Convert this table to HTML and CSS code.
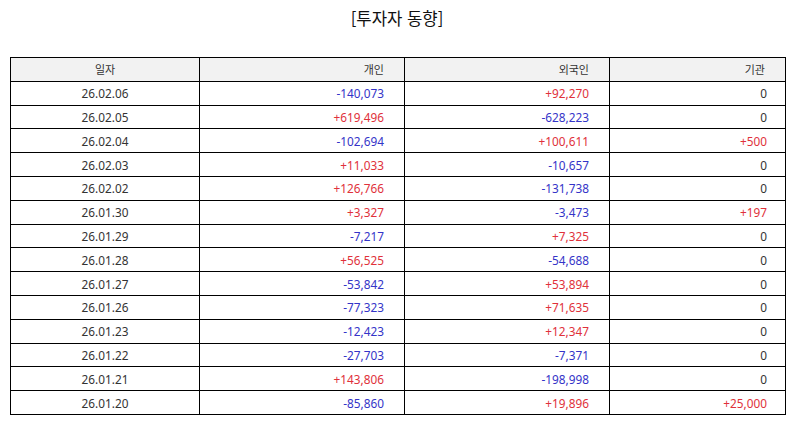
FILE: index.html
```html
<!DOCTYPE html>
<html lang="ko">
<head>
<meta charset="utf-8">
<title>투자자 동향</title>
<link rel="stylesheet" href="styles.css">
</head>
<body>
<h1 class="title">[투자자 동향]</h1>
<table class="flow">
  <colgroup>
    <col class="c-date"><col class="c-num"><col class="c-num"><col class="c-inst">
  </colgroup>
  <thead>
    <tr><th class="center">일자</th><th>개인</th><th>외국인</th><th>기관</th></tr>
  </thead>
  <tbody>
    <tr><td class="center">26.02.06</td><td class="dn">-140,073</td><td class="up">+92,270</td><td>0</td></tr>
    <tr><td class="center">26.02.05</td><td class="up">+619,496</td><td class="dn">-628,223</td><td>0</td></tr>
    <tr><td class="center">26.02.04</td><td class="dn">-102,694</td><td class="up">+100,611</td><td class="up">+500</td></tr>
    <tr><td class="center">26.02.03</td><td class="up">+11,033</td><td class="dn">-10,657</td><td>0</td></tr>
    <tr><td class="center">26.02.02</td><td class="up">+126,766</td><td class="dn">-131,738</td><td>0</td></tr>
    <tr><td class="center">26.01.30</td><td class="up">+3,327</td><td class="dn">-3,473</td><td class="up">+197</td></tr>
    <tr><td class="center">26.01.29</td><td class="dn">-7,217</td><td class="up">+7,325</td><td>0</td></tr>
    <tr><td class="center">26.01.28</td><td class="up">+56,525</td><td class="dn">-54,688</td><td>0</td></tr>
    <tr><td class="center">26.01.27</td><td class="dn">-53,842</td><td class="up">+53,894</td><td>0</td></tr>
    <tr><td class="center">26.01.26</td><td class="dn">-77,323</td><td class="up">+71,635</td><td>0</td></tr>
    <tr><td class="center">26.01.23</td><td class="dn">-12,423</td><td class="up">+12,347</td><td>0</td></tr>
    <tr><td class="center">26.01.22</td><td class="dn">-27,703</td><td class="dn">-7,371</td><td>0</td></tr>
    <tr><td class="center">26.01.21</td><td class="up">+143,806</td><td class="dn">-198,998</td><td>0</td></tr>
    <tr><td class="center">26.01.20</td><td class="dn">-85,860</td><td class="up">+19,896</td><td class="up">+25,000</td></tr>
  </tbody>
</table>
</body>
</html>
```
FILE: styles.css
```css
html, body {
  margin: 0;
  padding: 0;
  background: #ffffff;
}
body {
  font-family: "Noto Sans", "Noto Sans CJK KR", sans-serif;
  color: #333333;
}
.title {
  margin: 0;
  padding-top: 7px;
  height: 50px;
  box-sizing: border-box;
  text-align: center;
  font-family: "Noto Sans CJK KR", sans-serif;
  font-weight: 400;
  font-size: 16.7px;
  line-height: 22px;
  color: #111111;
}
.flow {
  margin: 7px 0 0 10px;
  width: 775px;
  border-collapse: collapse;
  table-layout: fixed;
  font-size: 11.8px;
}
.c-date { width: 189px; }
.c-num { width: 205px; }
.c-inst { width: 176px; }
.flow th,
.flow td {
  border: 1px solid #000000;
  height: 23.8px;
  padding: 0 20px 0 4px;
  text-align: right;
  font-weight: 400;
  line-height: 14px;
  color: #333333;
  box-sizing: border-box;
}
.flow td:last-child {
  padding-right: 18px;
}
.flow th {
  background: #f2f2f2;
  font-family: "Noto Sans CJK KR", sans-serif;
  font-size: 11px;
}
.flow .center {
  text-align: center;
  padding: 0 4px;
}
.flow .up { color: #e0313a; }
.flow .dn { color: #3434c8; }
```
